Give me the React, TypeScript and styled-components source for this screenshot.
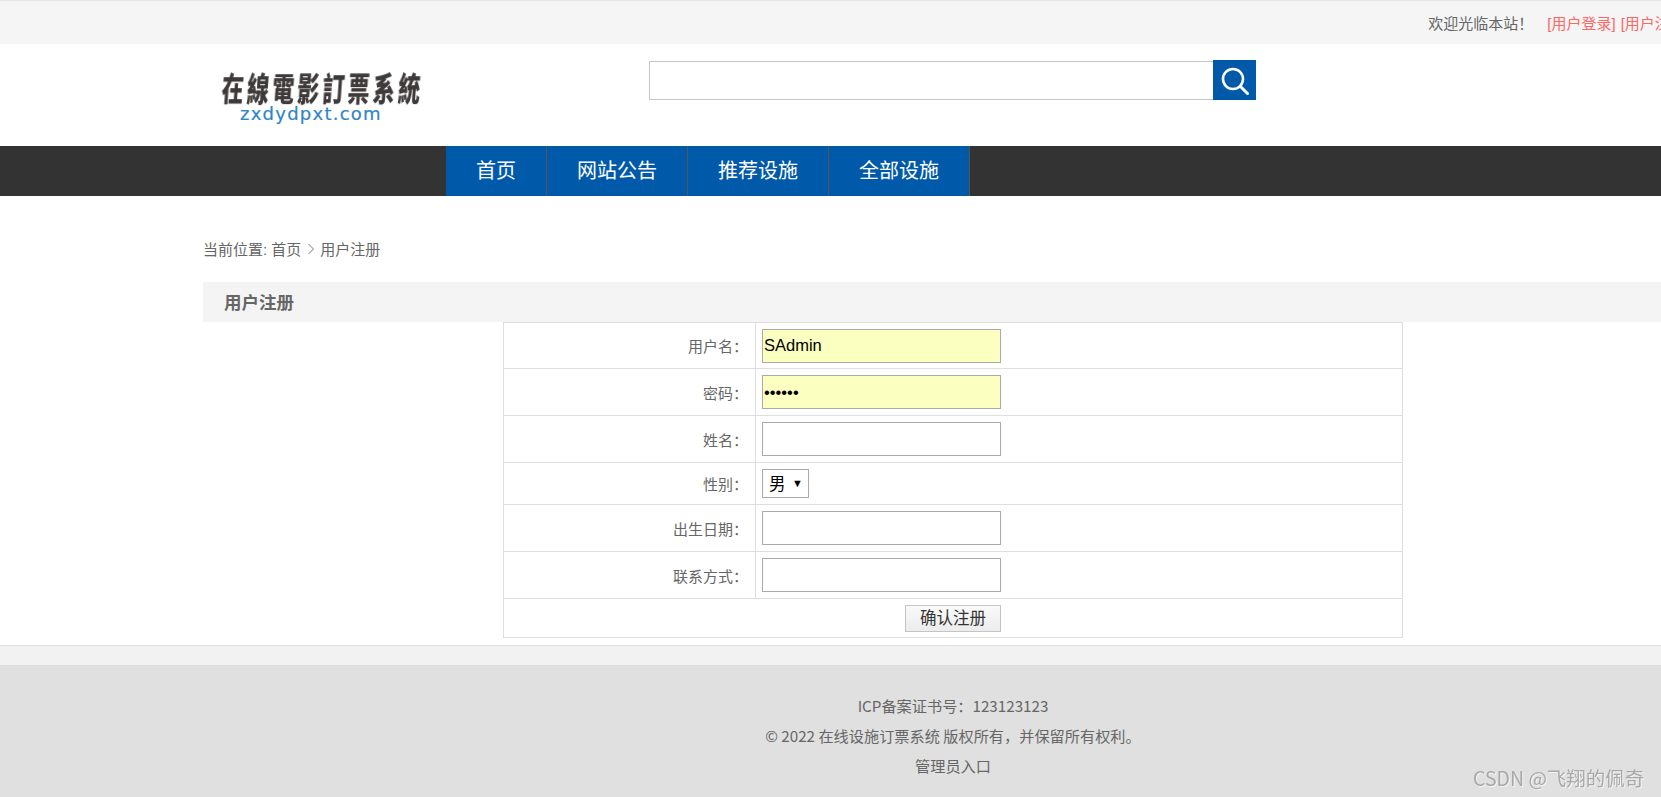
import React from "react";
import styled, { createGlobalStyle } from "styled-components";

const FONT = `"Liberation Sans", "Noto Sans CJK SC", sans-serif`;
const FOOTER_FONT = `"Noto Sans CJK SC", sans-serif`;

const GlobalStyle = createGlobalStyle`
  html, body {
    margin: 0;
    padding: 0;
    height: 797px;
    overflow: hidden;
    background: #fff;
  }
  body {
    font-family: ${FONT};
    font-size: 15px;
    color: #666;
  }
`;

const Page = styled.div`
  width: 1906px;
`;
const Container = styled.div`
  width: 1500px;
  margin: 0 auto;
`;

const TopBar = styled.div`
  height: 43px;
  background: #f5f5f5;
  border-top: 1px solid #e5e5e5;
`;
const TopBarInner = styled(Container)`
  display: flex;
  justify-content: flex-end;
  align-items: center;
  height: 43px;
  padding-right: 14px;
  box-sizing: border-box;
`;
const Welcome = styled.span`
  margin-right: 9px;
  color: #666;
`;
const TopLink = styled.a`
  margin-left: 5px;
  color: #ff6666;
  text-decoration: none;
`;

const Header = styled(Container)`
  display: flex;
  height: 102px;
`;
const Logo = styled.div`
  width: 446px;
  padding: 23px 0 0 19px;
  box-sizing: border-box;
`;
const LogoTitle = styled.div`
  width: 198px;
  height: 39px;
  font-family: "Noto Sans CJK TC", sans-serif;
  font-weight: 900;
  font-size: 22px;
  line-height: 38px;
  letter-spacing: 3.2px;
  white-space: nowrap;
  color: #3e3a3a;
  transform: scaleY(1.5) skewX(-6deg);
  filter: blur(0.4px);
`;
const LogoDomain = styled.div`
  margin-left: 18px;
  font-family: "DejaVu Sans", sans-serif;
  font-size: 18px;
  line-height: 16px;
  letter-spacing: 1.25px;
  color: #2f86c9;
  white-space: nowrap;
  -webkit-text-stroke: 0.2px #2f86c9;
`;
const SearchBox = styled.form`
  display: flex;
  margin-top: 16px;
  height: 40px;
`;
const SearchInput = styled.input`
  width: 564px;
  height: 39px;
  margin-top: 1px;
  box-sizing: border-box;
  border: 1px solid #c4c4c4;
  border-right: 0;
  outline: none;
  background: #fff;
`;
const SearchButton = styled.button`
  display: flex;
  width: 43px;
  height: 40px;
  padding: 0;
  border: 0;
  background: #005aa9;
`;

const NavBar = styled.div`
  height: 50px;
  background: #333;
`;
const NavList = styled(Container)`
  display: flex;
  height: 50px;
  padding-left: 243px;
  box-sizing: border-box;
`;
const NavItem = styled.a`
  display: block;
  padding: 0 30px;
  border-right: 1px solid #555;
  background: #005aa9;
  color: #fff;
  font-size: 20px;
  line-height: 50px;
  text-decoration: none;
`;

const Breadcrumb = styled.div`
  display: flex;
  align-items: center;
  height: 86px;
  padding-top: 18px;
  box-sizing: border-box;
  color: #666;
`;
const CrumbArrow = styled.svg`
  width: 8px;
  height: 12px;
  margin: 2px 5px 0 6px;
`;
const SectionTitle = styled.div`
  height: 40px;
  padding-left: 21px;
  background: #f4f4f4;
  color: #666;
  font-size: 17.5px;
  font-weight: bold;
  line-height: 43px;
`;

const FormTable = styled.table`
  width: 900px;
  margin: 0 auto;
  border-collapse: collapse;
  table-layout: fixed;
`;
const Row = styled.tr<{ $height: number }>`
  height: ${({ $height }) => $height}px;
`;
const LabelCell = styled.td`
  width: 252px;
  box-sizing: border-box;
  padding: 0 7px 0 0;
  border: 1px solid #dedede;
  text-align: right;
  color: #666;
  font-size: 15px;
`;
const FieldCell = styled.td`
  padding: 0 6px;
  border: 1px solid #dedede;
`;
const SubmitCell = styled.td`
  padding: 0;
  border: 1px solid #dedede;
  text-align: center;
`;
const TextField = styled.input<{ $filled?: boolean }>`
  display: block;
  width: 239px;
  height: 34px;
  padding: 0 1px;
  box-sizing: border-box;
  border: 1px solid #aaa;
  outline: none;
  background: ${({ $filled }) => ($filled ? "#fbffc0" : "#fff")};
  color: #000;
  font-family: "Liberation Sans", sans-serif;
  font-size: 16.5px;
`;
const SelectWrap = styled.div`
  position: relative;
  width: 47px;
  height: 29px;
  &::after {
    content: "▼";
    position: absolute;
    top: 7px;
    left: 30px;
    font-size: 11px;
    line-height: 14px;
    color: #000;
    pointer-events: none;
  }
`;
const GenderSelect = styled.select`
  display: block;
  width: 47px;
  height: 29px;
  padding: 0 0 0 6px;
  box-sizing: border-box;
  appearance: none;
  border: 1px solid #aaa;
  border-radius: 0;
  outline: none;
  background: #fff;
  color: #000;
  font-family: ${FONT};
  font-size: 16.5px;
`;
const SubmitButton = styled.button`
  display: block;
  width: 96px;
  height: 27px;
  margin: 0 0 0 401px;
  padding: 0;
  border: 1px solid #c4c4c4;
  border-radius: 0;
  background: linear-gradient(#fafafa, #ececec);
  color: #333;
  font-family: ${FONT};
  font-size: 16.5px;
  line-height: 25px;
`;

const FooterStrip = styled.div`
  height: 19px;
  margin-top: 7px;
  border-top: 1px solid #dedede;
  background: #f2f2f2;
`;
const Footer = styled.div`
  height: 132px;
  padding-top: 25px;
  box-sizing: border-box;
  background: #e0e0e0;
  text-align: center;
`;
const FooterLine = styled.div`
  color: #666;
  font-family: ${FOOTER_FONT};
  font-size: 15.2px;
  line-height: 30px;
`;
const Watermark = styled.div`
  position: fixed;
  left: 1473px;
  top: 766px;
  color: #a8a8a8;
  font-family: ${FOOTER_FONT};
  font-size: 19.5px;
  line-height: 24px;
  text-shadow: 1px 1px 0 #f4f4f4;
  white-space: nowrap;
`;

const App = () => {
  return (
    <Page>
      <GlobalStyle />
      <TopBar>
        <TopBarInner>
          <Welcome>欢迎光临本站！</Welcome>
          <TopLink href="#">[用户登录]</TopLink>
          <TopLink href="#">[用户注册]</TopLink>
        </TopBarInner>
      </TopBar>
      <Header>
        <Logo>
          <LogoTitle>在線電影訂票系統</LogoTitle>
          <LogoDomain>zxdydpxt.com</LogoDomain>
        </Logo>
        <SearchBox>
          <SearchInput />
          <SearchButton type="button" aria-label="搜索">
            <svg width="43" height="40" viewBox="0 0 43 40" fill="none" stroke="#fff">
              <circle cx="20" cy="19" r="10" strokeWidth="2.6" />
              <path d="M27.5 26.5 L34.5 33.5" strokeWidth="3" strokeLinecap="round" />
            </svg>
          </SearchButton>
        </SearchBox>
      </Header>
      <NavBar>
        <NavList>
          <NavItem href="#">首页</NavItem>
          <NavItem href="#">网站公告</NavItem>
          <NavItem href="#">推荐设施</NavItem>
          <NavItem href="#">全部设施</NavItem>
        </NavList>
      </NavBar>
      <Container>
        <Breadcrumb>
          当前位置: 首页
          <CrumbArrow viewBox="0 0 8 12" fill="none" stroke="#777">
            <path d="M1.5 1 L6.5 6 L1.5 11" strokeWidth="1" />
          </CrumbArrow>
          用户注册
        </Breadcrumb>
        <SectionTitle>用户注册</SectionTitle>
        <FormTable>
          <tbody>
            <Row $height={46}>
              <LabelCell>用户名：</LabelCell>
              <FieldCell>
                <TextField $filled readOnly value="SAdmin" />
              </FieldCell>
            </Row>
            <Row $height={47}>
              <LabelCell>密码：</LabelCell>
              <FieldCell>
                <TextField $filled readOnly type="password" value="123456" />
              </FieldCell>
            </Row>
            <Row $height={47}>
              <LabelCell>姓名：</LabelCell>
              <FieldCell>
                <TextField readOnly />
              </FieldCell>
            </Row>
            <Row $height={42}>
              <LabelCell>性别：</LabelCell>
              <FieldCell>
                <SelectWrap>
                  <GenderSelect defaultValue="男">
                    <option>男</option>
                    <option>女</option>
                  </GenderSelect>
                </SelectWrap>
              </FieldCell>
            </Row>
            <Row $height={47}>
              <LabelCell>出生日期：</LabelCell>
              <FieldCell>
                <TextField readOnly />
              </FieldCell>
            </Row>
            <Row $height={47}>
              <LabelCell>联系方式：</LabelCell>
              <FieldCell>
                <TextField readOnly />
              </FieldCell>
            </Row>
            <Row $height={39}>
              <SubmitCell colSpan={2}>
                <SubmitButton type="button">确认注册</SubmitButton>
              </SubmitCell>
            </Row>
          </tbody>
        </FormTable>
      </Container>
      <FooterStrip />
      <Footer>
        <FooterLine>ICP备案证书号：123123123</FooterLine>
        <FooterLine>© 2022 在线设施订票系统 版权所有，并保留所有权利。</FooterLine>
        <FooterLine>管理员入口</FooterLine>
      </Footer>
      <Watermark>CSDN @飞翔的佩奇</Watermark>
    </Page>
  );
};

export default App;
